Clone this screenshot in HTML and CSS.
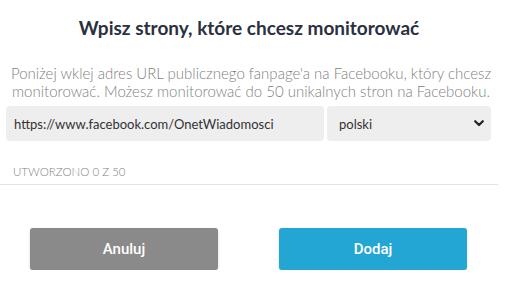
FILE: index.html
```html
<!DOCTYPE html>
<html lang="pl">
<head>
<meta charset="utf-8">
<link rel="stylesheet" href="styles.css">
</head>
<body>
<div class="modal">
  <h1 class="title">Wpisz strony, które chcesz monitorować</h1>
  <p class="desc">Poniżej wklej adres URL publicznego fanpage'a na Facebooku, który chcesz monitorować. Możesz monitorować do 50 unikalnych stron na Facebooku.</p>
  <div class="row">
    <div class="field url">https://www.facebook.com/OnetWiadomosci</div>
    <div class="field select">
      <span>polski</span>
      <svg class="chev" width="10" height="7" viewBox="0 0 10 7"><path d="M1.2 1.2 L5 5 L8.8 1.2" fill="none" stroke="#222" stroke-width="2.2" stroke-linecap="round" stroke-linejoin="round"/></svg>
    </div>
  </div>
  <div class="count">UTWORZONO 0 Z 50</div>
  <div class="divider"></div>
  <div class="actions">
    <div class="btn cancel">Anuluj</div>
    <div class="btn add">Dodaj</div>
  </div>
</div>
</body>
</html>
```
FILE: styles.css
```css
html, body {
  margin: 0;
  padding: 0;
  background: #fff;
}
.modal {
  width: 498px;
  font-family: Lato, "Open Sans", sans-serif;
}
.title {
  margin: 0;
  padding-top: 17px;
  font-size: 19px;
  font-weight: 700;
  line-height: 22px;
  color: #2b3040;
  text-align: center;
}
.desc {
  margin: 25px 0 0;
  padding: 0 0 0 4px;
  font-size: 15px;
  font-weight: 300;
  line-height: 18px;
  color: #7f7f7f;
  text-align: center;
}
.row {
  display: flex;
  gap: 3px;
  margin: 6px 7px 0 6px;
}
.field {
  height: 35px;
  background: #eeeeee;
  border-radius: 4px;
  display: flex;
  align-items: center;
  font-size: 13px;
  color: #333;
  box-sizing: border-box;
}
.url {
  width: 318px;
  padding-left: 8px;
}
.select {
  flex: 1;
  padding: 0 7px 0 12px;
  justify-content: space-between;
}
.count {
  margin: 24px 0 0 13px;
  font-size: 11.5px;
  font-weight: 300;
  color: #7f7f7f;
  line-height: 14px;
}
.divider {
  margin-top: 5px;
  height: 1px;
  background: #e3e3e3;
}
.actions {
  display: flex;
  justify-content: space-between;
  padding: 0 31px 0 30px;
  margin-top: 43px;
}
.btn {
  width: 188px;
  height: 42px;
  border-radius: 3px;
  display: flex;
  align-items: center;
  justify-content: center;
  font-family: Roboto, "Liberation Sans", sans-serif;
  font-weight: 500;
  font-size: 15px;
  color: #fff;
  box-shadow: 0 1px 3px rgba(0,0,0,0.15);
}
.cancel { background: #8a8a8a; }
.add { background: #24a6d5; }
```
